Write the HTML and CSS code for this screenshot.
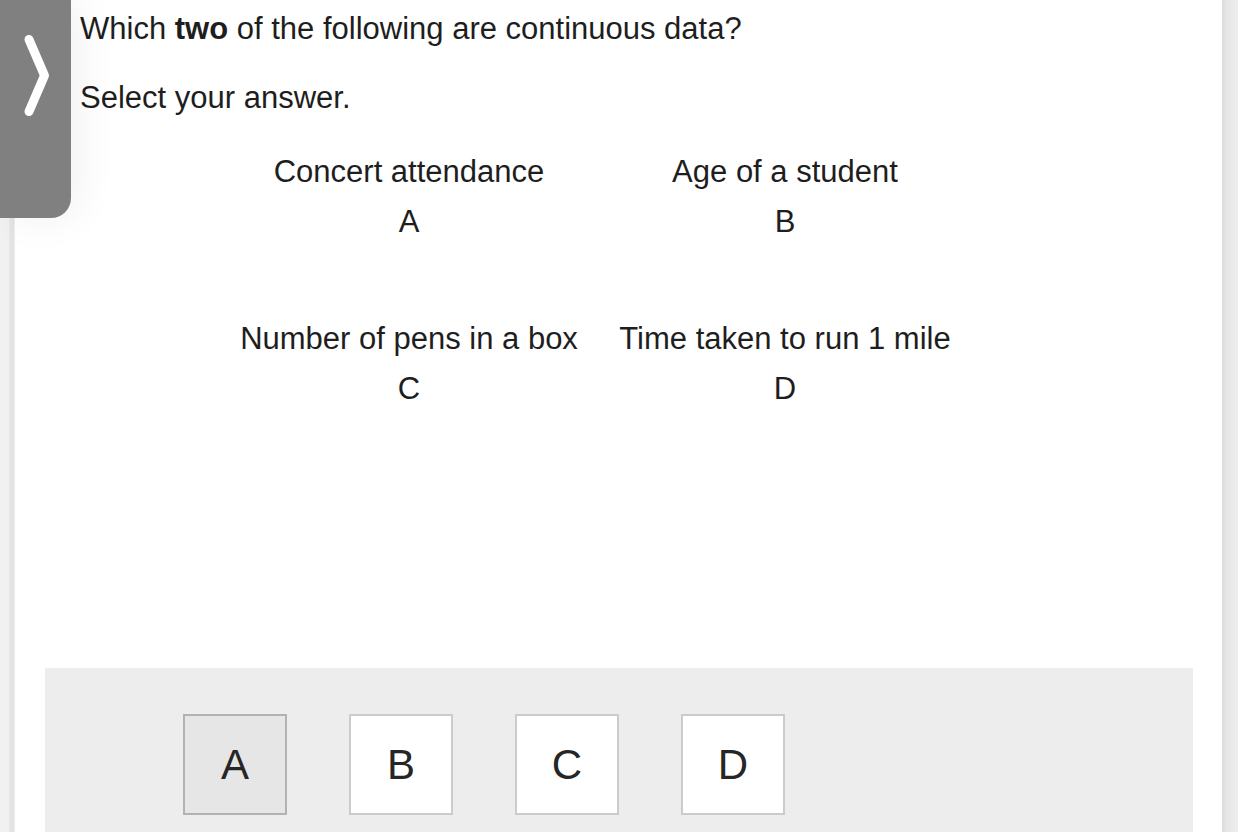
FILE: index.html
```html
<!DOCTYPE html>
<html lang="en">
<head>
<meta charset="utf-8">
<title>Question</title>
<link rel="stylesheet" href="styles.css">
</head>
<body>
<div class="page">
  <div class="gutter-left"></div>
  <main class="card">
    <p class="question">Which <b>two</b> of the following are continuous data?</p>
    <p class="instruction">Select your answer.</p>
    <div class="options">
      <div class="option"><span class="opt-text">Concert attendance</span><span class="opt-label">A</span></div>
      <div class="option"><span class="opt-text">Age of a student</span><span class="opt-label">B</span></div>
      <div class="option"><span class="opt-text">Number of pens in a box</span><span class="opt-label">C</span></div>
      <div class="option"><span class="opt-text">Time taken to run 1 mile</span><span class="opt-label">D</span></div>
    </div>
    <div class="answer-bar">
      <button class="answer selected">A</button>
      <button class="answer">B</button>
      <button class="answer">C</button>
      <button class="answer">D</button>
    </div>
  </main>
  <div class="gutter-right"></div>
</div>
<div class="side-tab">
  <svg class="chevron" width="30" height="90" viewBox="0 0 30 90">
    <polyline points="8,6.5 23.5,42.5 8,78.5" fill="none" stroke="#ffffff" stroke-width="9" stroke-linecap="round" stroke-linejoin="round"/>
  </svg>
</div>
</body>
</html>
```
FILE: styles.css
```css
html, body {
  margin: 0;
  padding: 0;
  height: 100%;
  overflow: hidden;
}

body {
  background: #f0f0f0;
  font-family: "Liberation Sans", Arial, sans-serif;
  color: #1e1e1e;
}

.page {
  display: flex;
  height: 832px;
}

.gutter-left {
  width: 15px;
  flex: none;
  background: linear-gradient(to right, #f1f1f1 0, #f0f0f0 9px, #e3e3e3 10px, #e3e3e3 14px, #f6f6f6 15px);
}

.gutter-right {
  width: 16px;
  flex: none;
  background: linear-gradient(to right, #dcdcdc 0, #e6e6e6 5px, #efefef 16px);
}

.card {
  flex: 1;
  background: #ffffff;
  padding: 11px 0 0 0;
  display: flex;
  flex-direction: column;
}

.question,
.instruction {
  margin: 0 0 0 65px;
  font-size: 31px;
  line-height: 36px;
}

.question b {
  font-weight: bold;
}

.instruction {
  margin-top: 33px;
}

.options {
  display: grid;
  grid-template-columns: 380px 372px;
  row-gap: 67px;
  margin: 31px 0 0 204px;
}

.option {
  display: flex;
  flex-direction: column;
  align-items: center;
  font-size: 31px;
  line-height: 50px;
}

.answer-bar {
  margin: 254px 29px 0 30px;
  background: #ededed;
  flex: 1;
  display: flex;
  gap: 62px;
  padding: 46px 0 0 138px;
  align-items: flex-start;
}

.answer {
  width: 104px;
  height: 101px;
  box-sizing: border-box;
  border: 2px solid #cbcbcb;
  background: #ffffff;
  font-family: "Liberation Sans", Arial, sans-serif;
  font-size: 42px;
  color: #262626;
  padding: 0;
  margin: 0;
}

.answer.selected {
  background: #e6e6e6;
  border-color: #b2b2b2;
}

.side-tab {
  position: absolute;
  left: 0;
  top: 0;
  width: 71px;
  height: 218px;
  background: #808080;
  border-bottom-right-radius: 20px;
  box-shadow: 8px 0 40px rgba(0, 0, 0, 0.06);
}

.chevron {
  position: absolute;
  left: 21px;
  top: 33px;
}
```
